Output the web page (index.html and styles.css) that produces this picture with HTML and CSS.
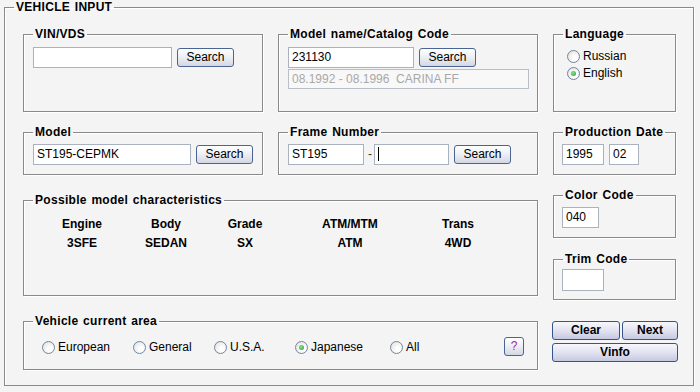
FILE: index.html
```html
<!DOCTYPE html>
<html lang="en">
<head>
	<meta charset="UTF-8">
	<title>Vehicle input</title>
	<link rel="stylesheet" href="styles.css">
</head>
<body>

<fieldset class="main">
	<legend>VEHICLE INPUT</legend>
	<div class="layout">
		<div class="left">
			<div class="row">
				<fieldset class="box w240">
					<legend>VIN/VDS</legend>
					<div class="inner h70 pt6">
						<div class="line">
							<div class="txt" style="width:139px"></div>
							<div class="btn">Search</div>
						</div>
					</div>
				</fieldset>
				<fieldset class="box w260">
					<legend>Model name/Catalog Code</legend>
					<div class="inner h70 pt6">
						<div class="line">
							<div class="txt" style="width:126px">231130</div>
							<div class="btn">Search</div>
						</div>
						<div class="txt off" style="width:241px">08.1992 - 08.1996  CARINA FF</div>
					</div>
				</fieldset>
			</div>

			<div class="row mt13">
				<fieldset class="box w240">
					<legend>Model</legend>
					<div class="inner h35 pt5">
						<div class="line">
							<div class="txt" style="width:158px">ST195-CEPMK</div>
							<div class="btn">Search</div>
						</div>
					</div>
				</fieldset>
				<fieldset class="box w260">
					<legend>Frame Number</legend>
					<div class="inner h35 pt5">
						<div class="line">
							<div class="txt" style="width:76px">ST195</div>
							<span class="dash">-</span>
							<div class="txt" style="width:75px"><span class="caret"></span></div>
							<div class="btn">Search</div>
						</div>
					</div>
				</fieldset>
			</div>

			<fieldset class="box mt18">
				<legend>Possible model characteristics</legend>
				<div class="inner h88">
					<div class="chars">
						<div>Engine</div><div>Body</div><div>Grade</div><div>ATM/MTM</div><div>Trans</div>
						<div>3SFE</div><div>SEDAN</div><div>SX</div><div>ATM</div><div>4WD</div>
					</div>
				</div>
			</fieldset>

			<fieldset class="box mt18">
				<legend>Vehicle current area</legend>
				<div class="inner h41 area">
					<div class="areas">
						<label class="opt"><span class="radio"></span>European</label>
						<label class="opt"><span class="radio"></span>General</label>
						<label class="opt"><span class="radio"></span>U.S.A.</label>
						<label class="opt"><span class="radio on"></span>Japanese</label>
						<label class="opt"><span class="radio"></span>All</label>
					</div>
					<div class="btn help">?</div>
				</div>
			</fieldset>
		</div>

		<div class="right">
			<fieldset class="box side">
				<legend>Language</legend>
				<div class="inner h70 lang">
					<label class="opt"><span class="radio"></span>Russian</label>
					<label class="opt"><span class="radio on"></span>English</label>
				</div>
			</fieldset>
			<fieldset class="box side mt13">
				<legend>Production Date</legend>
				<div class="inner h35 pt5">
					<div class="line">
						<div class="txt" style="width:42px">1995</div>
						<div class="txt" style="width:30px">02</div>
					</div>
				</div>
			</fieldset>
			<fieldset class="box side mt13">
				<legend>Color Code</legend>
				<div class="inner h35 pt5">
					<div class="txt" style="width:37px">040</div>
				</div>
			</fieldset>
			<fieldset class="box side mt14">
				<legend>Trim Code</legend>
				<div class="inner h33 pt3">
					<div class="txt" style="width:42px;height:22px"></div>
				</div>
			</fieldset>
			<div class="actions">
				<div class="btn big clear">Clear</div>
				<div class="btn big next">Next</div>
				<div class="btn big vinfo">Vinfo</div>
			</div>
		</div>
	</div>
</fieldset>

</body>
</html>
```
FILE: styles.css
```css
*{box-sizing:border-box}
body{margin:0;background:#f4f4f4;font:12px "Liberation Sans",Arial,sans-serif;color:#000}
fieldset{margin:0;min-width:0;border:1px solid #8a8a8a;box-shadow:1px 1px 0 #fff,inset 1px 1px 0 #fff}
legend{padding:0 2px;font-weight:bold;font-size:12px;line-height:14px;letter-spacing:0.3px;word-spacing:1px}

.main{margin:0 6px 0 4px;padding:13px 16px 0 18px;height:386px}
.main > legend{margin-left:-9px}
.layout{display:flex;gap:15px}
.left{width:515px;display:flex;flex-direction:column}
.right{width:123px;display:flex;flex-direction:column}
.row{display:flex;gap:15px}

.box{padding:0 9px}
.box.side{padding:0 8px}
.box.side legend{margin-left:1px}
.w240{width:240px}
.w260{width:260px}
.mt13{margin-top:13px}
.mt14{margin-top:14px}
.mt18{margin-top:18px}

.inner{display:flex;flex-direction:column;gap:1px}
.h70{height:70px}
.h35{height:35px}
.h33{height:33px}
.h41{height:41px}
.h88{height:88px}
.pt6{padding-top:6px}
.pt5{padding-top:5px}
.pt3{padding-top:3px}

.line{display:flex;align-items:flex-start;gap:5px}
.txt{height:21px;background:#fff;border:1px solid #aab2bf;padding:0 3px;line-height:19px;white-space:pre;overflow:hidden}
.txt.off{background:#f8f8f8;border-color:#b9bfc9;color:#a8a8a8;height:20px;line-height:18px}
.dash{width:2px;margin:0 -1px;text-align:center;line-height:20px;color:#333}
.caret{display:inline-block;width:1px;height:14px;background:#000;vertical-align:middle;margin-top:-2px}

.btn{width:57px;height:19px;margin-top:1px;border:1px solid #4a6591;border-radius:3px;background:linear-gradient(#ffffff,#eef0f5 45%,#d3d7e2);text-align:center;line-height:17px;color:#000}

.chars{display:grid;grid-template-columns:98px 70px 88px 122px 94px;row-gap:5px;padding-top:10px;font-weight:bold;text-align:center;line-height:14px}

.area{flex-direction:row;align-items:flex-start;padding-top:9px}
.areas{display:grid;grid-template-columns:91px 81px 81px 95px auto;padding-left:9px;margin-top:2px;flex:1}
.help{width:20px;margin:0 4px 0 0;color:#a326a8;font-size:12px}

.opt{display:flex;align-items:center;gap:3px;height:17px;line-height:17px}
.radio{width:13px;height:13px;border-radius:50%;border:1px solid #6f86a3;background:radial-gradient(circle at 65% 65%,#ffffff 20%,#dddcd6);position:relative}
.radio.on::after{content:"";position:absolute;left:3px;top:3px;width:5px;height:5px;border-radius:50%;background:radial-gradient(circle at 40% 40%,#8ee08e,#21a021)}
.lang{padding:7px 0 0 5px;gap:0}

.actions{display:flex;flex-wrap:wrap;gap:3px 2px;margin:21px -2px 0 -1px}
.btn.big{margin:0;font-weight:bold;border-color:#34548a;background:linear-gradient(#f7f7fc,#e2e3f0 50%,#c5c9df)}
.clear{width:68px}
.next{width:56px}
.vinfo{width:126px}
```
